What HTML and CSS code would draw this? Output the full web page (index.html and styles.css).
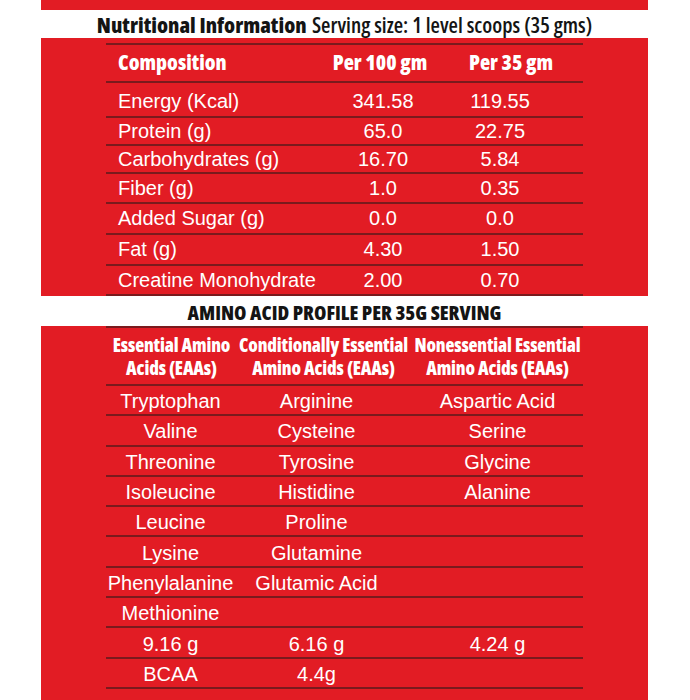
FILE: index.html
```html
<!DOCTYPE html>
<html lang="en">
<head>
<meta charset="utf-8">
<title>Nutritional Information</title>
<link rel="stylesheet" href="styles.css">
</head>
<body>
<div class="sheet">
  <div class="band"></div>
  <h1 class="title"><b>Nutritional Information</b> Serving size: 1 level scoops (35 gms)</h1>
  <section class="red red-nutri">
    <div class="ntable">
      <div class="nrow nhead"><span class="c1">Composition</span><span class="c2">Per 100 gm</span><span class="c3">Per 35 gm</span></div>
      <div class="nrow"><span class="c1">Energy (Kcal)</span><span class="c2">341.58</span><span class="c3">119.55</span></div>
      <div class="nrow"><span class="c1">Protein (g)</span><span class="c2">65.0</span><span class="c3">22.75</span></div>
      <div class="nrow"><span class="c1">Carbohydrates (g)</span><span class="c2">16.70</span><span class="c3">5.84</span></div>
      <div class="nrow"><span class="c1">Fiber (g)</span><span class="c2">1.0</span><span class="c3">0.35</span></div>
      <div class="nrow"><span class="c1">Added Sugar (g)</span><span class="c2">0.0</span><span class="c3">0.0</span></div>
      <div class="nrow"><span class="c1">Fat (g)</span><span class="c2">4.30</span><span class="c3">1.50</span></div>
      <div class="nrow"><span class="c1">Creatine Monohydrate</span><span class="c2">2.00</span><span class="c3">0.70</span></div>
    </div>
  </section>
  <h2 class="title2">AMINO ACID PROFILE PER 35G SERVING</h2>
  <section class="red red-amino">
    <div class="atable">
      <div class="arow ahead">
        <div class="hcell"><span>Essential Amino</span><span>Acids (EAAs)</span></div>
        <div class="hcell"><span>Conditionally Essential</span><span>Amino Acids (EAAs)</span></div>
        <div class="hcell"><span>Nonessential Essential</span><span>Amino Acids (EAAs)</span></div>
      </div>
      <div class="arow"><span>Tryptophan</span><span class="m">Arginine</span><span>Aspartic Acid</span></div>
      <div class="arow"><span>Valine</span><span class="m">Cysteine</span><span>Serine</span></div>
      <div class="arow"><span>Threonine</span><span class="m">Tyrosine</span><span>Glycine</span></div>
      <div class="arow"><span>Isoleucine</span><span class="m">Histidine</span><span>Alanine</span></div>
      <div class="arow"><span>Leucine</span><span class="m">Proline</span><span></span></div>
      <div class="arow"><span>Lysine</span><span class="m">Glutamine</span><span></span></div>
      <div class="arow"><span>Phenylalanine</span><span class="m">Glutamic Acid</span><span></span></div>
      <div class="arow"><span>Methionine</span><span class="m"></span><span></span></div>
      <div class="arow"><span>9.16 g</span><span class="m">6.16 g</span><span>4.24 g</span></div>
      <div class="arow"><span>BCAA</span><span class="m">4.4g</span><span></span></div>
    </div>
  </section>
</div>
</body>
</html>
```
FILE: styles.css
```css
* { box-sizing: border-box; }

body {
  margin: 0;
  background: #fff;
  font-family: "Liberation Sans", Arial, sans-serif;
}

.sheet {
  width: 607px;
  height: 700px;
  margin-left: 41px;
  display: flex;
  flex-direction: column;
  overflow: hidden;
}

.band {
  height: 10px;
  background: #e21c24;
  flex: none;
}

.title {
  margin: 0;
  height: 28px;
  flex: none;
  display: flex;
  align-items: center;
  justify-content: center;
  gap: 0.25em;
  font-family: "Open Sans", sans-serif;
  font-stretch: 75%;
  font-size: 21.5px;
  font-weight: 600;
  color: #141414;
  white-space: nowrap;
}

.title b { font-weight: 800; }

.red { background: #e21c24; flex: none; }

.red-nutri { padding-top: 5px; }

.ntable, .atable {
  width: 477px;
  margin: 0 auto;
  border-top: 2px solid #7a1a1d;
}

.nrow {
  display: grid;
  grid-template-columns: 212px 130px 104px 1fr;
  align-items: center;
  height: 30px;
  border-bottom: 2px solid #7a1a1d;
  color: #fff;
  font-size: 20px;
}

.nrow .c1 { padding-left: 12px; white-space: nowrap; }
.nrow .c2, .nrow .c3 { text-align: center; }

.nrow.nhead {
  height: 38px;
  font-family: "Open Sans", sans-serif;
  font-stretch: 75%;
  font-weight: 800;
  font-size: 21px;
  padding-bottom: 2px;
}
.nrow.nhead .c2 { padding-right: 6px; }
.nrow.nhead .c3 { text-align: left; padding-left: 21px; white-space: nowrap; }

.nrow:nth-child(2) { height: 35px; padding-top: 4px; }
.nrow:nth-child(3) { height: 28px; }
.nrow:nth-child(4) { height: 28px; }
.nrow:nth-child(5) { height: 30px; }
.nrow:nth-child(6) { height: 31px; }
.nrow:nth-child(7) { height: 31px; }
.nrow:nth-child(8) { height: 30px; }

.title2 {
  margin: 0;
  height: 30px;
  flex: none;
  display: flex;
  align-items: center;
  justify-content: center;
  font-family: "Open Sans", sans-serif;
  font-stretch: 75%;
  font-weight: 800;
  font-size: 20px;
  color: #141414;
  padding-top: 2px;
}

.red-amino { flex: 1; }

.arow {
  display: grid;
  grid-template-columns: 129px 177px 171px;
  align-items: center;
  height: 30.3px;
  border-bottom: 2px solid #7a1a1d;
  color: #fff;
  font-size: 20px;
  text-align: center;
  white-space: nowrap;
}

.arow > span { padding-top: 3px; }
.arow .m { padding-right: 14px; }

.arow.ahead {
  height: 58px;
  font-family: "Open Sans", sans-serif;
  font-stretch: 75%;
  font-weight: 800;
  font-size: 18.5px;
  letter-spacing: -0.15px;
  line-height: 23px;
}

.hcell {
  display: flex;
  flex-direction: column;
  align-items: center;
}
.hcell:first-child { padding-left: 2px; }
```
